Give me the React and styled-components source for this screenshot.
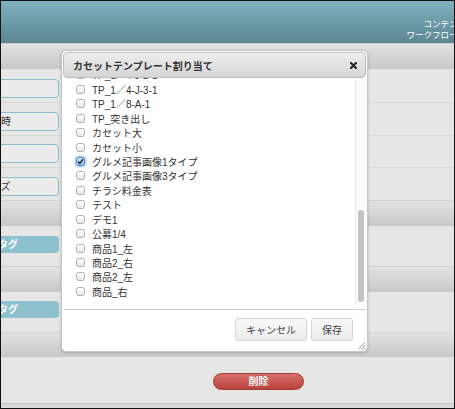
import { useLayoutEffect, useRef } from "react";
import styled, { createGlobalStyle } from "styled-components";

const GlobalStyle = createGlobalStyle`
  html, body { margin: 0; padding: 0; }
  body {
    font-family: "Liberation Sans", "Noto Sans CJK JP", sans-serif;
    -webkit-font-smoothing: antialiased;
  }
`;

const Frame = styled.div`
  position: relative;
  width: 455px;
  height: 409px;
  box-sizing: border-box;
  border: 1px solid #111;
  overflow: hidden;
  background: #e6e6e6;
  display: flex;
  flex-direction: column;
`;

const Header = styled.div`
  height: 42px;
  flex: none;
  background: linear-gradient(#80b1bf, #5c8692);
  display: flex;
  justify-content: flex-end;
  align-items: flex-start;
  padding-top: 18px;
  box-sizing: border-box;
  margin-right: -29px;
`;

const Menu = styled.div`
  text-align: right;
  color: #fff;
  font-size: 8.5px;
  line-height: 11px;
  white-space: nowrap;
`;

const Bar = styled.div`
  height: ${(p) => p.$h || 26}px;
  flex: none;
  box-sizing: border-box;
  background: linear-gradient(#e2e2e2, #c8c8c8);
  border-top: 1px solid #d0d0d0;
`;

const Row = styled.div`
  height: ${(p) => p.$h}px;
  flex: none;
  box-sizing: border-box;
  padding-top: ${(p) => p.$pad}px;
  border-bottom: ${(p) => (p.$line ? "1px solid #d6d6d6" : "none")};
`;

const Field = styled.div`
  margin-left: -70px;
  width: 128px;
  height: 19px;
  box-sizing: border-box;
  border: 1px solid #86c0cc;
  border-radius: 4px;
  background: #ebebeb;
  padding-left: 19px;
  font-size: 10px;
  line-height: 17px;
  color: #333;
  white-space: nowrap;
  overflow: hidden;
`;

const Tag = styled.div`
  margin-left: -70px;
  width: 128px;
  height: 17px;
  box-sizing: border-box;
  border-radius: 4px;
  background: #8dc1cd;
  padding-left: 47px;
  font-size: 10px;
  font-weight: bold;
  line-height: 17px;
  color: #fff;
  white-space: nowrap;
  overflow: hidden;
`;

const Bottom = styled.div`
  flex: 1;
  padding: 14px 0 0 212px;
  box-sizing: border-box;
`;

const Danger = styled.button`
  width: 91px;
  height: 17px;
  padding: 0;
  border: 1px solid #a43a36;
  border-radius: 9px;
  background: linear-gradient(#d8706a, #b9433e);
  color: #fff;
  font-family: inherit;
  font-size: 10px;
  font-weight: bold;
  line-height: 15px;
  text-shadow: 0 -1px 0 rgba(0, 0, 0, 0.25);
`;

const Foot = styled.div`
  height: 4px;
  flex: none;
  border-top: 1px solid #c4c4c4;
  background: #dadada;
`;

const Dialog = styled.div`
  position: absolute;
  top: 49px;
  left: 60px;
  width: 307px;
  height: 302px;
  box-sizing: border-box;
  border: 1px solid #c6c6c6;
  border-radius: 5px;
  background: #fff;
  padding: 1px;
  box-shadow: 0 1px 3px rgba(0, 0, 0, 0.2);
  display: flex;
  flex-direction: column;
`;

const TitleBar = styled.div`
  height: 26px;
  flex: none;
  box-sizing: border-box;
  border: 1px solid #bcbcbc;
  border-radius: 4px;
  background: linear-gradient(#eeeeee, #d5d5d5);
  display: flex;
  align-items: center;
  justify-content: space-between;
  padding: 0 8px 0 9px;
  font-size: 10px;
  font-weight: bold;
  color: #333;
  position: relative;
  z-index: 1;
`;

const Close = styled.svg`
  width: 7px;
  height: 7px;
  display: block;
`;

const ListWrap = styled.div`
  height: 227px;
  flex: none;
  display: flex;
`;

const Items = styled.div`
  flex: 1;
  overflow: hidden;
  padding: 0 0 6px 13px;
  box-sizing: border-box;
`;

const Item = styled.label`
  height: 14.45px;
  display: flex;
  align-items: center;
  gap: 7px;
  font-size: 10px;
  color: #333;
  white-space: nowrap;
`;

const Box = styled.span`
  width: 9px;
  height: 9px;
  flex: none;
  box-sizing: border-box;
  border-radius: 2.5px;
  display: flex;
  align-items: center;
  justify-content: center;
  border: 1px solid ${(p) => (p.$on ? "#4f86c6" : "#b0b0b0")};
  background: ${(p) =>
    p.$on ? "linear-gradient(#cfe2f7, #8ab6e6)" : "linear-gradient(#ffffff, #e6e6e6)"};
  box-shadow: ${(p) => (p.$on ? "0 0 2px 1px rgba(80, 140, 210, 0.55)" : "none")};
`;

const Track = styled.div`
  width: 11px;
  flex: none;
  box-sizing: border-box;
  border-left: 1px solid #e8e8e8;
  background: #fbfbfb;
  padding-left: 2px;
`;

const Thumb = styled.div`
  width: 6px;
  border-radius: 3px;
  background: #c2c2c2;
`;

const Footer = styled.div`
  flex: 1;
  margin-top: 4px;
  border-top: 1px solid #cfcfcf;
  display: flex;
  justify-content: flex-end;
  align-items: flex-start;
  gap: 4px;
  padding: 8px 13px 0 0;
`;

const Btn = styled.button`
  height: 23px;
  padding: 0 10px;
  border: 1px solid #d6d6d6;
  border-radius: 3px;
  background: linear-gradient(#f8f8f8, #ececec);
  color: #444;
  font-family: inherit;
  font-size: 10px;
`;

const Grip = styled.svg`
  position: absolute;
  right: 1px;
  bottom: 1px;
  width: 9px;
  height: 9px;
`;

const hidden = [
  "A4_チラシ", "B4_チラシ", "TP_1／1-A-1", "TP_1／1-B-1", "TP_1／2-A-1",
  "TP_1／2-A-2", "TP_1／2-B-1", "TP_1／2-B-2", "TP_1／3-A-1", "TP_1／3-B-1",
  "TP_1／4-A-1", "TP_1／4-A-2", "TP_1／4-B-1", "TP_1／4-B-2", "TP_1／4-C-1",
  "TP_1／4-D-1", "TP_1／4-E-1", "TP_1／4-F-1", "TP_1／4-G-1", "TP_1／4-H-1",
  "TP_1／4-I-1", "TP_1／4-J-1-1", "TP_1／4-J-2-1",
];

const visible = [
  "TP_1／4-J-3-1", "TP_1／8-A-1", "TP_突き出し", "カセット大", "カセット小",
  "グルメ記事画像1タイプ", "グルメ記事画像3タイプ", "チラシ料金表", "テスト", "デモ1",
  "公募1/4", "商品1_左", "商品2_右", "商品2_左", "商品_右",
];

const templates = [...hidden, ...visible];
const checked = "グルメ記事画像1タイプ";

const ROW_H = 14.45;
const VIEW_H = 227;

export default function App() {
  const listRef = useRef(null);

  useLayoutEffect(() => {
    const el = listRef.current;
    if (el) el.scrollTop = el.scrollHeight;
  }, []);

  const contentH = templates.length * ROW_H + 6;
  const trackH = VIEW_H - 3;
  const thumbH = (trackH * VIEW_H) / contentH;

  return (
    <>
      <GlobalStyle />
      <Frame>
        <Header>
          <Menu>
            <div>コンテンツ一覧</div>
            <div>ワークフロー申請中</div>
          </Menu>
        </Header>
        <Bar $h={26} />
        <Row $h={34} $pad={10} $line>
          <Field />
        </Row>
        <Row $h={33} $pad={9} $line>
          <Field>掲載開始日時</Field>
        </Row>
        <Row $h={32} $pad={8} $line>
          <Field />
        </Row>
        <Row $h={32} $pad={9}>
          <Field>サムネサイズ</Field>
        </Row>
        <Bar $h={26} />
        <Row $h={40} $pad={10}>
          <Tag>関連タグ</Tag>
        </Row>
        <Bar $h={26} />
        <Row $h={40} $pad={9}>
          <Tag>関連タグ</Tag>
        </Row>
        <Bar $h={25} />
        <Bottom>
          <Danger>削除</Danger>
        </Bottom>
        <Foot />

        <Dialog>
          <TitleBar>
            <span>カセットテンプレート割り当て</span>
            <Close viewBox="0 0 7 7">
              <path d="M1 1L6 6M6 1L1 6" stroke="#222" strokeWidth="2.1" strokeLinecap="round" />
            </Close>
          </TitleBar>
          <ListWrap>
            <Items ref={listRef}>
              {templates.map((name) => (
                <Item key={name}>
                  <Box $on={name === checked}>
                    {name === checked && (
                      <svg width="9" height="9" viewBox="0 0 9 9">
                        <path d="M1.6 4.6L3.6 6.8L7.8 1.4" fill="none" stroke="#111" strokeWidth="1.7" />
                      </svg>
                    )}
                  </Box>
                  {name}
                </Item>
              ))}
            </Items>
            <Track>
              <Thumb style={{ marginTop: trackH - thumbH, height: thumbH }} />
            </Track>
          </ListWrap>
          <Footer>
            <Btn>キャンセル</Btn>
            <Btn>保存</Btn>
          </Footer>
          <Grip viewBox="0 0 9 9">
            <path d="M8.5 1L1 8.5M8.5 4L4 8.5M8.5 7L7 8.5" stroke="#888" strokeWidth="0.9" />
          </Grip>
        </Dialog>
      </Frame>
    </>
  );
}
